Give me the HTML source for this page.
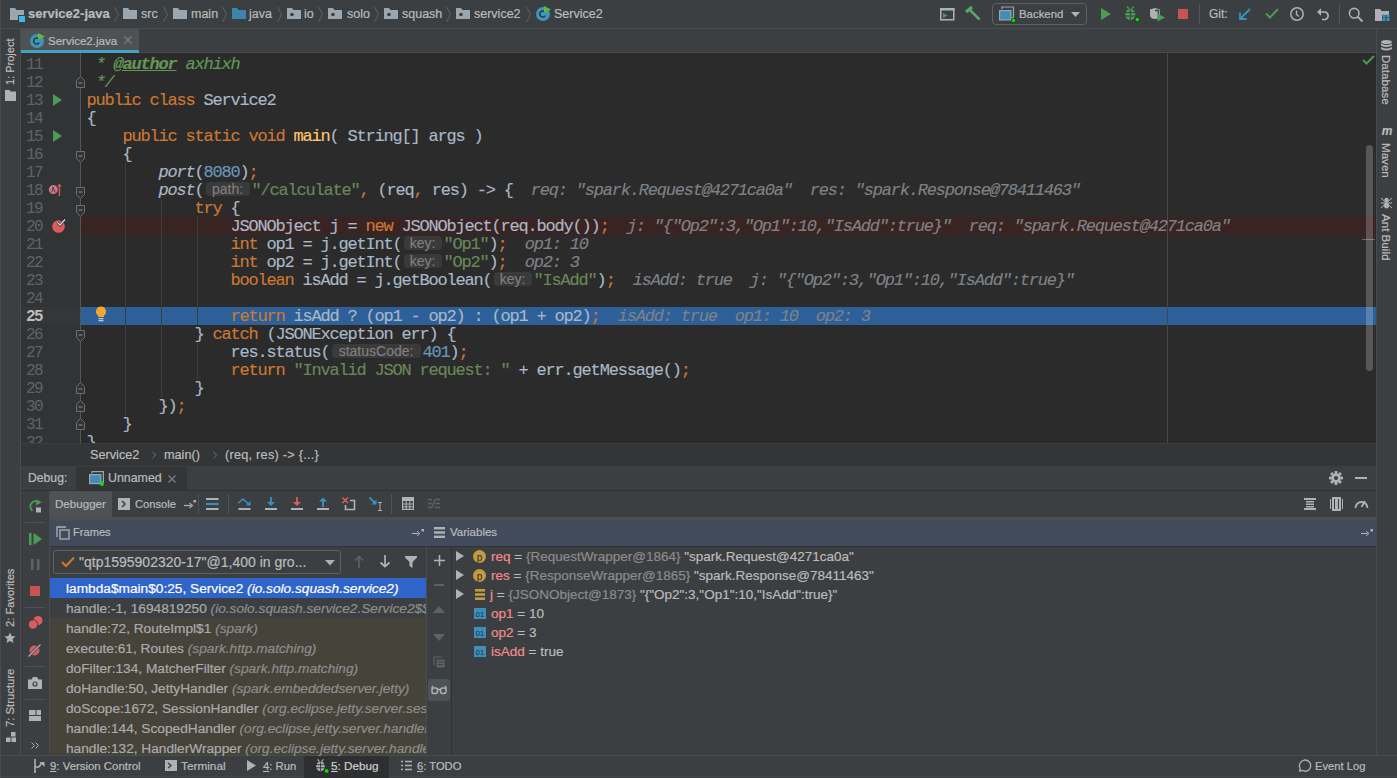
<!DOCTYPE html>
<html><head><meta charset="utf-8">
<style>
*{margin:0;padding:0;box-sizing:border-box}
html,body{width:1397px;height:778px;overflow:hidden;background:#3C3F41;font-family:"Liberation Sans",sans-serif;color:#BBBBBB}
.a{position:absolute}
.t{position:absolute;white-space:pre;font-size:12px;line-height:14px}
.code{position:absolute;left:86.5px;-webkit-text-stroke:0.15px currentColor;font-family:"Liberation Mono",monospace;font-size:17px;letter-spacing:-1.2px;line-height:18px;margin-top:1px;white-space:pre;color:#A9B7C6}
.k{color:#CC7832}.s{color:#6A8759}.n{color:#6897BB}.i{font-style:italic}.m{color:#FFC66D}.c{color:#629755;font-style:italic}
.dv{color:#7E8287;font-style:italic}
.h{display:inline-block;font-family:"Liberation Sans",sans-serif;font-size:14px;letter-spacing:0;color:#808080;background:#3A3A3A;border-radius:4px;line-height:14px;height:14px;vertical-align:1px;text-align:center}
.ln{position:absolute;left:20px;width:22px;text-align:right;font-family:"Liberation Mono",monospace;font-size:16px;letter-spacing:-1.6px;line-height:18px;margin-top:1px;color:#606366}
svg{position:absolute;overflow:visible;z-index:1}
.t{z-index:1;-webkit-text-stroke:0.2px currentColor}
</style></head><body>
<!-- navbar -->
<div class="a" style="left:0;top:0;width:1397px;height:28px;background:#3C3F41"></div>
<div class="a" style="left:0;top:28px;width:1397px;height:1px;background:#4A4B4D"></div>

<!-- navbar content -->
<svg style="left:10px;top:8px" width="15" height="14" viewBox="0 0 15 14">
 <path d="M0 0h5l1.5 2H14v10H0z" fill="#9AA7B0"/><rect x="8" y="7" width="7" height="7" fill="#3C3F41"/><rect x="9" y="8" width="6" height="6" fill="#40B6E0"/></svg>
<div class="t" style="left:28px;top:7px;font-size:13px;font-weight:bold;color:#BBBBBB">service2-java</div>
<svg style="left:114px;top:7px" width="5" height="15"><path d="M0.5 0L4.5 7.5L0.5 15" stroke="#5F6263" fill="none"/></svg>
<svg style="left:123px;top:8px" width="14" height="11" viewBox="0 0 14 11"><path d="M0 0h5l1.5 2H14v9H0z" fill="#9AA7B0"/></svg>
<div class="t" style="left:141px;top:7px;font-size:12.5px">src</div>
<svg style="left:163px;top:7px" width="5" height="15"><path d="M0.5 0L4.5 7.5L0.5 15" stroke="#5F6263" fill="none"/></svg>
<svg style="left:173px;top:8px" width="14" height="11" viewBox="0 0 14 11"><path d="M0 0h5l1.5 2H14v9H0z" fill="#9AA7B0"/></svg>
<div class="t" style="left:191px;top:7px;font-size:12.5px">main</div>
<svg style="left:222px;top:7px" width="5" height="15"><path d="M0.5 0L4.5 7.5L0.5 15" stroke="#5F6263" fill="none"/></svg>
<svg style="left:232px;top:8px" width="14" height="11" viewBox="0 0 14 11"><path d="M0 0h5l1.5 2H14v9H0z" fill="#3E86A9"/></svg>
<div class="t" style="left:249px;top:7px;font-size:12.5px">java</div>
<svg style="left:277px;top:7px" width="5" height="15"><path d="M0.5 0L4.5 7.5L0.5 15" stroke="#5F6263" fill="none"/></svg>
<svg style="left:287px;top:8px" width="14" height="11" viewBox="0 0 14 11"><path d="M0 0h5l1.5 2H14v9H0z" fill="#9AA7B0"/><circle cx="5" cy="6.5" r="1.8" fill="#3C3F41"/></svg>
<div class="t" style="left:304px;top:7px;font-size:12.5px">io</div>
<svg style="left:318px;top:7px" width="5" height="15"><path d="M0.5 0L4.5 7.5L0.5 15" stroke="#5F6263" fill="none"/></svg>
<svg style="left:328px;top:8px" width="14" height="11" viewBox="0 0 14 11"><path d="M0 0h5l1.5 2H14v9H0z" fill="#9AA7B0"/><circle cx="5" cy="6.5" r="1.8" fill="#3C3F41"/></svg>
<div class="t" style="left:347px;top:7px;font-size:12.5px">solo</div>
<svg style="left:374px;top:7px" width="5" height="15"><path d="M0.5 0L4.5 7.5L0.5 15" stroke="#5F6263" fill="none"/></svg>
<svg style="left:384px;top:8px" width="14" height="11" viewBox="0 0 14 11"><path d="M0 0h5l1.5 2H14v9H0z" fill="#9AA7B0"/><circle cx="5" cy="6.5" r="1.8" fill="#3C3F41"/></svg>
<div class="t" style="left:402px;top:7px;font-size:12.5px">squash</div>
<svg style="left:446px;top:7px" width="5" height="15"><path d="M0.5 0L4.5 7.5L0.5 15" stroke="#5F6263" fill="none"/></svg>
<svg style="left:456px;top:8px" width="14" height="11" viewBox="0 0 14 11"><path d="M0 0h5l1.5 2H14v9H0z" fill="#9AA7B0"/><circle cx="5" cy="6.5" r="1.8" fill="#3C3F41"/></svg>
<div class="t" style="left:474px;top:7px;font-size:12.5px">service2</div>
<svg style="left:526px;top:7px" width="5" height="15"><path d="M0.5 0L4.5 7.5L0.5 15" stroke="#5F6263" fill="none"/></svg>
<svg style="left:536px;top:6px" width="15" height="15" viewBox="0 0 15 15"><circle cx="7" cy="8" r="7" fill="#3F95BA"/><path d="M9.2 6.3A3 3 0 1 0 9.2 9.7" stroke="#283A44" stroke-width="1.6" fill="none"/><path d="M8 0L15 3.5L8 7z" fill="#62B543"/></svg>
<div class="t" style="left:554px;top:7px;font-size:12.5px">Service2</div>
<!-- toolbar right -->
<svg style="left:940px;top:8px" width="15" height="13" viewBox="0 0 15 13"><rect x="0.75" y="0.75" width="13" height="11" fill="none" stroke="#AFB1B3" stroke-width="1.5"/><rect x="0" y="0" width="14.5" height="2.5" fill="#AFB1B3"/><path d="M3 5l4.5 2.5L3 10z" fill="#499C54"/></svg>
<svg style="left:965px;top:6px" width="16" height="15" viewBox="0 0 16 15"><path d="M1 6L7 1" stroke="#59A869" stroke-width="3"/><path d="M4.5 3.5L14.5 13.5" stroke="#59A869" stroke-width="2.5"/></svg>
<div class="a" style="left:992px;top:3px;width:95px;height:22px;border:1px solid #5E6163;border-radius:4px"></div>
<svg style="left:999px;top:6px" width="17" height="17" viewBox="0 0 17 17"><path d="M3 3V1h11.5v10.5H12.5" stroke="#9AA7B0" stroke-width="1.2" fill="none"/><rect x="0.6" y="4.6" width="11.3" height="9.3" fill="#3D8EB9" stroke="#9AA7B0" stroke-width="1.2"/><circle cx="14.4" cy="14.4" r="2.2" fill="#00E600" stroke="#1C1C1C" stroke-width="0.6"/></svg>
<div class="t" style="left:1019px;top:7px;font-size:11.4px">Backend</div>
<svg style="left:1071px;top:12px" width="9" height="5"><path d="M0 0h9L4.5 5z" fill="#AFB1B3"/></svg>
<svg style="left:1101px;top:8px" width="10" height="12"><path d="M0 0L10 6L0 12z" fill="#499C54"/></svg>
<svg style="left:1124px;top:6px" width="16" height="16" viewBox="0 0 16 16"><g fill="#499C54"><ellipse cx="6.3" cy="8.5" rx="5" ry="5.5"/><path d="M3 0.5L5 3M9.6 0.5L7.6 3" stroke="#499C54" stroke-width="1.3"/></g><path d="M0 6.5h12.6M0 10h12.6M6.3 4v10" stroke="#3C3F41" stroke-width="1"/><circle cx="13.3" cy="13.6" r="2.2" fill="#00E600" stroke="#1C1C1C" stroke-width="0.6"/></svg>
<svg style="left:1150px;top:8px" width="16" height="14" viewBox="0 0 16 14"><path d="M0 1.5L5 0L10 1.5V7C10 10 7 11 5 11C3 11 0 10 0 7z" fill="#AFB1B3"/><path d="M5 2.5H8.5V9" stroke="#3C3F41" stroke-width="1.4" fill="none"/><path d="M7.5 5.5L15 9.5L7.5 13.5z" fill="#499C54"/></svg>
<div class="a" style="left:1178px;top:9px;width:10px;height:10px;background:#C75450"></div>
<div class="a" style="left:1199px;top:4px;width:1px;height:20px;background:#515658"></div>
<div class="t" style="left:1209px;top:7px;font-size:12px">Git:</div>
<svg style="left:1239px;top:8px" width="12" height="12"><path d="M11 1L2 10" stroke="#3592C4" stroke-width="1.8"/><path d="M1 4.5V11H7.5" stroke="#3592C4" stroke-width="1.8" fill="none"/></svg>
<svg style="left:1265px;top:8px" width="14" height="11"><path d="M1 5.5L5 9.5L13 1" stroke="#499C54" stroke-width="2" fill="none"/></svg>
<svg style="left:1290px;top:7px" width="15" height="15"><circle cx="7" cy="7" r="6.2" stroke="#AFB1B3" stroke-width="1.5" fill="none"/><path d="M6.5 3.5V7.5L9 9.5" stroke="#AFB1B3" stroke-width="1.4" fill="none"/></svg>
<svg style="left:1317px;top:7px" width="14" height="14"><path d="M1.5 5H8.5A4 4 0 0 1 8.5 12.5H5" stroke="#AFB1B3" stroke-width="1.6" fill="none"/><path d="M0 5L4 1.2V8.8z" fill="#AFB1B3"/></svg>
<div class="a" style="left:1339px;top:4px;width:1px;height:20px;background:#515658"></div>
<svg style="left:1348px;top:7px" width="16" height="15"><circle cx="6.2" cy="6.2" r="4.8" stroke="#AFB1B3" stroke-width="1.6" fill="none"/><path d="M9.5 9.5L14.5 14.5" stroke="#AFB1B3" stroke-width="1.8"/></svg>
<svg style="left:1375px;top:9px" width="15" height="12" viewBox="0 0 15 12"><path d="M0 0h5l1.5 2H14v4H7v6H0z" fill="#AFB1B3"/><rect x="7.5" y="5.5" width="3" height="3" fill="#3592C4"/><rect x="11.5" y="5.5" width="3" height="3" fill="#3592C4"/><rect x="7.5" y="9" width="3" height="3" fill="#3592C4"/><rect x="11.5" y="9" width="3" height="3" fill="#3592C4"/></svg>
<!-- tab -->
<svg style="left:30px;top:33px" width="15" height="15" viewBox="0 0 15 15"><circle cx="7" cy="8" r="7" fill="#3F95BA"/><path d="M9.2 6.3A3 3 0 1 0 9.2 9.7" stroke="#283A44" stroke-width="1.6" fill="none"/><path d="M8 0L15 3.5L8 7z" fill="#62B543"/></svg>
<div class="t" style="left:48px;top:34px;font-size:11.5px">Service2.java</div>
<svg style="left:124px;top:36px" width="8" height="8"><path d="M0.5 0.5L7.5 7.5M7.5 0.5L0.5 7.5" stroke="#7E8083" stroke-width="1.1"/></svg>

<!-- left strip -->
<div class="a" style="left:0;top:29px;width:20px;height:726px;background:#3C3F41"></div>
<div class="a" style="left:20px;top:29px;width:1px;height:726px;background:#4A4B4D"></div>
<!-- right strip -->
<div class="a" style="left:1376px;top:29px;width:1px;height:726px;background:#4A4B4D"></div>
<!-- tab row -->
<div class="a" style="left:21px;top:29px;width:1355px;height:24px;background:#3C3F41"></div>
<div class="a" style="left:21px;top:52px;width:1355px;height:1px;background:#4A4B4D"></div>
<div class="a" style="left:21px;top:29px;width:118px;height:24px;background:#4E5254"></div>
<div class="a" style="left:21px;top:50px;width:118px;height:3px;background:#41A2C3"></div>
<!-- editor -->
<div class="a" style="left:21px;top:53px;width:1355px;height:390px;background:#2B2B2B;overflow:hidden" id="ed"></div>
<div class="a" style="left:21px;top:53px;width:59px;height:390px;background:#313335"></div>
<div class="a" style="left:80px;top:53px;width:1px;height:390px;background:#555555"></div>

<!-- editor rows -->
<div class="a" style="left:81px;top:217px;width:1295px;height:18px;background:#3A2323"></div>
<div class="a" style="left:81px;top:307px;width:1295px;height:18px;background:#2D6099"></div>
<div class="a" style="left:21px;top:307px;width:59px;height:18px;background:#343638"></div>
<!-- indent guides -->
<div class="a" style="left:125px;top:163px;width:1px;height:252px;background:#3D3D3D"></div>
<div class="a" style="left:161px;top:199px;width:1px;height:198px;background:#3D3D3D"></div>
<div class="a" style="left:197px;top:217px;width:1px;height:108px;background:#3D3D3D"></div>
<div class="a" style="left:197px;top:343px;width:1px;height:36px;background:#3D3D3D"></div>
<!-- right margin -->
<div class="a" style="left:1167px;top:53px;width:1px;height:390px;background:#474747"></div>
<!-- scrollbar -->
<div class="a" style="left:1366px;top:145px;width:7px;height:226px;background:rgba(255,255,255,0.21);border-radius:4px;z-index:2"></div>
<div class="ln" style="top:55px">11</div>
<div class="code" style="top:55px"> <span class="c">* <b style="text-decoration:underline">@author</b> axhixh</span></div>
<div class="ln" style="top:73px">12</div>
<div class="code" style="top:73px"> <span class="c">*/</span></div>
<div class="ln" style="top:91px">13</div>
<div class="code" style="top:91px"><span class="k">public class</span> Service2</div>
<div class="ln" style="top:109px">14</div>
<div class="code" style="top:109px">{</div>
<div class="ln" style="top:127px">15</div>
<div class="code" style="top:127px">    <span class="k">public static void</span> <span class="m">main</span>( String[] args )</div>
<div class="ln" style="top:145px">16</div>
<div class="code" style="top:145px">    {</div>
<div class="ln" style="top:163px">17</div>
<div class="code" style="top:163px">        <span class="i">port</span>(<span class="n">8080</span>)<span class="k">;</span></div>
<div class="ln" style="top:181px">18</div>
<div class="code" style="top:181px">        <span class="i">post</span>(<span class="h" style="width:44px;margin:0 2px 0 2px">path:</span><span class="s">"/calculate"</span><span class="k">,</span> (req<span class="k">,</span> res) -&gt; {  <span class="dv">req: "spark.Request@4271ca0a"  res: "spark.Response@78411463"</span></div>
<div class="ln" style="top:199px">19</div>
<div class="code" style="top:199px">            <span class="k">try</span> {</div>
<div class="ln" style="top:217px">20</div>
<div class="code" style="top:217px">                JSONObject j = <span class="k">new</span> JSONObject(req.body())<span class="k">;</span>  <span class="dv">j: "{"Op2":3,"Op1":10,"IsAdd":true}"  req: "spark.Request@4271ca0a"</span></div>
<div class="ln" style="top:235px">21</div>
<div class="code" style="top:235px">                <span class="k">int</span> op1 = j.getInt(<span class="h" style="width:38px;margin:0 2px 0 2px">key:</span><span class="s">"Op1"</span>)<span class="k">;</span>  <span class="dv">op1: 10</span></div>
<div class="ln" style="top:253px">22</div>
<div class="code" style="top:253px">                <span class="k">int</span> op2 = j.getInt(<span class="h" style="width:38px;margin:0 2px 0 2px">key:</span><span class="s">"Op2"</span>)<span class="k">;</span>  <span class="dv">op2: 3</span></div>
<div class="ln" style="top:271px">23</div>
<div class="code" style="top:271px">                <span class="k">boolean</span> isAdd = j.getBoolean(<span class="h" style="width:38px;margin:0 2px 0 2px">key:</span><span class="s">"IsAdd"</span>)<span class="k">;</span>  <span class="dv">isAdd: true  j: "{"Op2":3,"Op1":10,"IsAdd":true}"</span></div>
<div class="ln" style="top:289px">24</div>
<div class="code" style="top:289px"></div>
<div class="ln" style="top:307px;color:#BDBDBD;font-weight:bold">25</div>
<div class="code" style="top:307px">                <span class="k">return</span> isAdd ? (op1 - op2) : (op1 + op2)<span class="k">;</span>  <span class="dv">isAdd: true  op1: 10  op2: 3</span></div>
<div class="ln" style="top:325px">26</div>
<div class="code" style="top:325px">            } <span class="k">catch</span> (JSONException err) {</div>
<div class="ln" style="top:343px">27</div>
<div class="code" style="top:343px">                res.status(<span class="h" style="width:89px;margin:0 2px 0 2px">statusCode:</span><span class="n">401</span>)<span class="k">;</span></div>
<div class="ln" style="top:361px">28</div>
<div class="code" style="top:361px">                <span class="k">return</span> <span class="s">"Invalid JSON request: "</span> + err.getMessage()<span class="k">;</span></div>
<div class="ln" style="top:379px">29</div>
<div class="code" style="top:379px">            }</div>
<div class="ln" style="top:397px">30</div>
<div class="code" style="top:397px">        })<span class="k">;</span></div>
<div class="ln" style="top:415px">31</div>
<div class="code" style="top:415px">    }</div>
<div class="ln" style="top:433px">32</div>
<div class="code" style="top:433px">}</div>

<!-- gutter icons -->
<svg style="left:76px;top:76px" width="9" height="12" viewBox="0 0 9 12"><path d="M0.5 11.5H8.5V4.5L4.5 0.5L0.5 4.5z" fill="#313335" stroke="#6E6E6E"/><path d="M2.5 7H6.5" stroke="#8C8C8C"/></svg><svg style="left:76px;top:151px" width="9" height="12" viewBox="0 0 9 12"><path d="M0.5 0.5H8.5V7.5L4.5 11.5L0.5 7.5z" fill="#313335" stroke="#6E6E6E"/><path d="M2.5 5H6.5" stroke="#8C8C8C"/></svg><svg style="left:76px;top:187px" width="9" height="12" viewBox="0 0 9 12"><path d="M0.5 0.5H8.5V7.5L4.5 11.5L0.5 7.5z" fill="#313335" stroke="#6E6E6E"/><path d="M2.5 5H6.5" stroke="#8C8C8C"/></svg><svg style="left:76px;top:205px" width="9" height="12" viewBox="0 0 9 12"><path d="M0.5 0.5H8.5V7.5L4.5 11.5L0.5 7.5z" fill="#313335" stroke="#6E6E6E"/><path d="M2.5 5H6.5" stroke="#8C8C8C"/></svg><svg style="left:76px;top:330px" width="9" height="12" viewBox="0 0 9 12"><path d="M0.5 0.5H8.5V7.5L4.5 11.5L0.5 7.5z" fill="#313335" stroke="#6E6E6E"/><path d="M2.5 5H6.5" stroke="#8C8C8C"/></svg><svg style="left:76px;top:382px" width="9" height="12" viewBox="0 0 9 12"><path d="M0.5 11.5H8.5V4.5L4.5 0.5L0.5 4.5z" fill="#313335" stroke="#6E6E6E"/><path d="M2.5 7H6.5" stroke="#8C8C8C"/></svg><svg style="left:76px;top:400px" width="9" height="12" viewBox="0 0 9 12"><path d="M0.5 11.5H8.5V4.5L4.5 0.5L0.5 4.5z" fill="#313335" stroke="#6E6E6E"/><path d="M2.5 7H6.5" stroke="#8C8C8C"/></svg><svg style="left:76px;top:418px" width="9" height="12" viewBox="0 0 9 12"><path d="M0.5 11.5H8.5V4.5L4.5 0.5L0.5 4.5z" fill="#313335" stroke="#6E6E6E"/><path d="M2.5 7H6.5" stroke="#8C8C8C"/></svg>
<svg style="left:53px;top:94px" width="9" height="12"><path d="M0 0L9 6L0 12z" fill="#499C54"/></svg>
<svg style="left:53px;top:130px" width="9" height="12"><path d="M0 0L9 6L0 12z" fill="#499C54"/></svg>
<svg style="left:48px;top:183px" width="14" height="14" viewBox="0 0 14 14"><circle cx="5.3" cy="6.6" r="4.5" fill="#C97A91"/><path d="M3.5 9.5L5.5 4.5M4.6 3.6L7.3 9.5" stroke="#4A2A35" stroke-width="0.9" fill="none"/><path d="M11.4 13V2.5" stroke="#D9534F" stroke-width="1.5"/><path d="M9 3.5L11.4 0.5L13.8 3.5z" fill="#D9534F"/></svg>
<svg style="left:52px;top:218px" width="14" height="15" viewBox="0 0 14 15"><circle cx="6.5" cy="8.5" r="6.3" fill="#DB5C5C"/><path d="M5.5 4.5L8 7L13 1.5" stroke="#2B2B2B" stroke-width="2.6" fill="none"/><path d="M5.5 4.5L8 7L13 1.5" stroke="#D8D8D8" stroke-width="1.3" fill="none"/></svg>
<svg style="left:95px;top:306px" width="12" height="16" viewBox="0 0 12 16"><path d="M6 0.5A5 5 0 0 1 9 9.5V11H3V9.5A5 5 0 0 1 6 0.5z" fill="#F0A732"/><path d="M3.5 12.7H8.5M3.5 14.8H8.5" stroke="#E8E8E8" stroke-width="1.1"/></svg>
<svg style="left:1362px;top:55px" width="13" height="10"><path d="M1 5L4.5 8.5L12 1" stroke="#499C54" stroke-width="2" fill="none"/></svg>
<div class="a" style="left:1362px;top:239px;width:13px;height:1px;background:#8A5A3A;z-index:1"></div>

<!-- breadcrumbs -->
<div class="a" style="left:21px;top:443px;width:1355px;height:23px;background:#333537"></div>
<div class="a" style="left:21px;top:443px;width:1355px;height:1px;background:#3A3C3E"></div>
<!-- debug header -->
<div class="a" style="left:76px;top:467px;width:111px;height:23px;background:#333537"></div>
<div class="a" style="left:21px;top:490px;width:1355px;height:1px;background:#323232"></div>
<!-- debug toolbar -->
<div class="a" style="left:49px;top:491px;width:1px;height:264px;background:#4A4B4D"></div>
<div class="a" style="left:50px;top:491px;width:62px;height:26px;background:#4E5254"></div>
<div class="a" style="left:50px;top:517px;width:1326px;height:4px;background:#4B4E50"></div>
<!-- headers -->
<div class="a" style="left:50px;top:521px;width:376px;height:25px;background:#414B5C"></div>
<div class="a" style="left:426px;top:521px;width:1px;height:234px;background:#4A4D50"></div>
<div class="a" style="left:427px;top:521px;width:950px;height:25px;background:#414B5C"></div>
<div class="a" style="left:50px;top:546px;width:1326px;height:1px;background:#323232"></div>
<!-- frames list -->
<div class="a" style="left:50px;top:618px;width:376px;height:137px;background:#46433A"></div>
<div class="a" style="left:50px;top:578px;width:376px;height:20px;background:#2F65CA"></div>
<div class="a" style="left:451px;top:547px;width:1px;height:208px;background:#323232"></div>
<!-- status bar -->
<div class="a" style="left:0;top:755px;width:1397px;height:1px;background:#4A4B4D"></div><div class="a" style="left:0;top:0;width:1px;height:778px;background:#4A4B4D"></div><div class="a" style="left:0;top:776px;width:1397px;height:1px;background:#45474A"></div>
<div class="a" style="left:304px;top:756px;width:85px;height:22px;background:#2D2F30"></div>

<!-- left strip content -->
<div class="t" style="left:5px;top:38px;width:11px;height:48px;writing-mode:vertical-rl;transform:rotate(180deg);font-size:11px;line-height:11px;text-align:center">1: Project</div>
<svg style="left:5px;top:90px" width="11" height="11"><path d="M0 0h4.5l1.2 1.6H11V11H0z" fill="#AFB1B3"/></svg>
<div class="t" style="left:5px;top:568px;width:11px;height:59px;writing-mode:vertical-rl;transform:rotate(180deg);font-size:11.2px;line-height:11px;text-align:center">2: Favorites</div>
<svg style="left:4px;top:632px" width="12" height="12" viewBox="0 0 24 24"><path d="M12 1l3.3 7.2 7.7.8-5.8 5.2 1.7 7.6L12 17.9l-6.9 3.9 1.7-7.6L1 9l7.7-.8z" fill="#AFB1B3"/></svg>
<div class="t" style="left:5px;top:668px;width:11px;height:60px;writing-mode:vertical-rl;transform:rotate(180deg);font-size:11.3px;line-height:11px;text-align:center">7: Structure</div>
<svg style="left:6px;top:732px" width="10" height="10"><rect x="5" y="0" width="4.5" height="4.5" fill="#AFB1B3"/><rect x="0" y="5.5" width="4.5" height="4.5" fill="#AFB1B3"/><rect x="5.5" y="5.5" width="4.5" height="4.5" fill="#AFB1B3"/></svg>
<!-- right strip content -->
<svg style="left:1381px;top:40px" width="11" height="12" viewBox="0 0 11 12"><ellipse cx="5.5" cy="2" rx="5.5" ry="2" fill="#AFB1B3"/><path d="M0 3.5Q5.5 6.5 11 3.5V5.5Q5.5 8.5 0 5.5zM0 7Q5.5 10 11 7V9Q5.5 12 0 9z" fill="#AFB1B3"/></svg>
<div class="t" style="left:1381px;top:55px;width:11px;height:50px;writing-mode:vertical-rl;font-size:11.6px;line-height:11px;text-align:center">Database</div>
<div class="t" style="left:1380px;top:126px;width:14px;height:11px;font-size:12px;line-height:11px;font-weight:bold;font-style:italic;text-align:center">m</div>
<div class="t" style="left:1381px;top:143px;width:11px;height:35px;writing-mode:vertical-rl;font-size:11.6px;line-height:11px;text-align:center">Maven</div>
<svg style="left:1381px;top:197px" width="11" height="12" viewBox="0 0 11 12"><ellipse cx="5.5" cy="3" rx="2.2" ry="2.2" fill="#AFB1B3"/><ellipse cx="5.5" cy="8.5" rx="2.5" ry="3" fill="#AFB1B3"/><path d="M0 1L11 11M11 1L0 11M0 6H11" stroke="#AFB1B3" stroke-width="1"/></svg>
<div class="t" style="left:1381px;top:214px;width:11px;height:46px;writing-mode:vertical-rl;font-size:11.6px;line-height:11px;text-align:center">Ant Build</div>
<!-- breadcrumbs content -->
<div class="t" style="left:90px;top:448px;font-size:12.7px;color:#BBBBBB">Service2</div>
<svg style="left:152px;top:451px" width="4" height="8"><path d="M0.5 0.5L3.5 4L0.5 7.5" stroke="#6A6D6F" fill="none"/></svg>
<div class="t" style="left:164px;top:448px;font-size:12.7px;color:#BBBBBB">main()</div>
<svg style="left:213px;top:451px" width="4" height="8"><path d="M0.5 0.5L3.5 4L0.5 7.5" stroke="#6A6D6F" fill="none"/></svg>
<div class="t" style="left:225px;top:448px;font-size:12.7px;color:#BBBBBB;letter-spacing:0.25px">(req, res) -&gt; {...}</div>
<!-- debug header content -->
<div class="t" style="left:28px;top:471px;font-size:12.2px">Debug:</div>
<svg style="left:89px;top:471px" width="16" height="15" viewBox="0 0 16 15"><path d="M3 2.5V0.6h11.4v10.2H12.5" stroke="#9AA7B0" stroke-width="1.2" fill="none"/><rect x="0.6" y="3.6" width="11.3" height="9" fill="#3D8EB9" stroke="#9AA7B0" stroke-width="1.2"/><circle cx="13" cy="13" r="2" fill="#00E600"/></svg>
<div class="t" style="left:108px;top:471px;font-size:12.4px">Unnamed</div>
<svg style="left:168px;top:475px" width="8" height="8"><path d="M0.5 0.5L7.5 7.5M7.5 0.5L0.5 7.5" stroke="#7E8083" stroke-width="1.1"/></svg>
<svg style="left:1329px;top:471px" width="14" height="14" viewBox="0 0 14 14"><g fill="#AFB1B3"><circle cx="7" cy="7" r="4.6"/><rect x="5.6" y="0" width="2.8" height="14"/><rect x="0" y="5.6" width="14" height="2.8"/><rect x="5.6" y="0" width="2.8" height="14" transform="rotate(45 7 7)"/><rect x="5.6" y="0" width="2.8" height="14" transform="rotate(-45 7 7)"/></g><circle cx="7" cy="7" r="2" fill="#3C3F41"/></svg>
<div class="a" style="left:1355px;top:477px;width:12px;height:2px;background:#AFB1B3"></div>
<!-- debug toolbar content -->
<svg style="left:28px;top:499px" width="15" height="14" viewBox="0 0 15 14"><path d="M11 3.2A5 5 0 1 0 4.5 11.8" stroke="#499C54" stroke-width="1.8" fill="none"/><path d="M8.2 0.5L13.8 3.2L8.2 6.5z" fill="#499C54"/><rect x="8" y="8.5" width="5" height="5" fill="#AFB1B3"/></svg>
<div class="a" style="left:25px;top:522px;width:20px;height:1px;background:#4F5254"></div>
<svg style="left:29px;top:533px" width="13" height="12"><rect x="0" y="0" width="2.5" height="12" fill="#499C54"/><path d="M4.5 0L13 6L4.5 12z" fill="#499C54"/></svg>
<svg style="left:31px;top:559px" width="9" height="11"><rect x="0" y="0" width="2.5" height="11" fill="#5F6263"/><rect x="6" y="0" width="2.5" height="11" fill="#5F6263"/></svg>
<div class="a" style="left:30px;top:586px;width:10px;height:10px;background:#C75450"></div>
<div class="a" style="left:25px;top:607px;width:20px;height:1px;background:#4F5254"></div>
<svg style="left:28px;top:616px" width="15" height="14"><circle cx="10" cy="4.5" r="4.5" fill="#DB5C5C"/><circle cx="5" cy="8.5" r="5" fill="#3C3F41"/><circle cx="5" cy="8.5" r="4.2" fill="#DB5C5C"/></svg>
<svg style="left:28px;top:644px" width="13" height="13"><circle cx="6.5" cy="6.5" r="5" fill="#DB5C5C"/><path d="M0.5 12.5L12.5 0.5" stroke="#3C3F41" stroke-width="2.6"/><path d="M0.5 12.5L12.5 0.5" stroke="#AFB1B3" stroke-width="1.2"/></svg>
<div class="a" style="left:25px;top:666px;width:20px;height:1px;background:#4F5254"></div>
<svg style="left:28px;top:677px" width="14" height="12" viewBox="0 0 14 12"><path d="M0 2.5H3.5L5 0H9L10.5 2.5H14V12H0z" fill="#AFB1B3"/><circle cx="7" cy="7" r="2.6" fill="#3C3F41"/><circle cx="7" cy="7" r="1.4" fill="#AFB1B3"/></svg>
<div class="a" style="left:25px;top:699px;width:20px;height:1px;background:#4F5254"></div>
<svg style="left:29px;top:710px" width="12" height="11"><rect x="0" y="0" width="6.5" height="5" fill="#AFB1B3"/><rect x="7.5" y="0" width="4.5" height="5" fill="#AFB1B3"/><rect x="0" y="6" width="12" height="5" fill="#AFB1B3"/></svg>
<svg style="left:31px;top:742px" width="9" height="7"><path d="M0.5 0.5L3.5 3.5L0.5 6.5M4.5 0.5L7.5 3.5L4.5 6.5" stroke="#AFB1B3" fill="none"/></svg>
<div class="t" style="left:55px;top:497px;font-size:11.6px">Debugger</div>
<svg style="left:118px;top:498px" width="12" height="12"><rect width="12" height="12" fill="#AFB1B3"/><path d="M4 3L7 6L4 9" stroke="#3C3F41" stroke-width="1.5" fill="none"/></svg>
<div class="t" style="left:135px;top:497px;font-size:11.2px">Console</div>
<svg style="left:184px;top:500px" width="12" height="8"><path d="M0 5.5H7" stroke="#AFB1B3" stroke-width="1.2"/><path d="M5.5 3L8.5 5.5L5.5 8" stroke="#AFB1B3" stroke-width="1.1" fill="none"/><rect x="9.5" y="0" width="2.5" height="2.5" fill="#AFB1B3"/></svg>
<div class="a" style="left:198px;top:494px;width:1px;height:20px;background:#505355"></div>
<svg style="left:206px;top:498px" width="13" height="12"><rect y="0" width="12.5" height="2" fill="#AFB1B3"/><rect y="5" width="12.5" height="2" fill="#3592C4"/><rect y="10" width="12.5" height="2" fill="#AFB1B3"/></svg>
<div class="a" style="left:228px;top:494px;width:1px;height:20px;background:#505355"></div>
<svg style="left:238px;top:497px" width="14" height="14" viewBox="0 0 14 14"><path d="M0.5 6L5 2L11 7.5" stroke="#3592C4" stroke-width="1.6" fill="none"/><path d="M8 8.5H12.5V4z" fill="#3592C4"/><rect x="0.5" y="11" width="12" height="2" fill="#AFB1B3"/></svg>
<svg style="left:265px;top:497px" width="13" height="14" viewBox="0 0 13 14"><path d="M6 0V6" stroke="#3592C4" stroke-width="1.8"/><path d="M2 5H10L6 9z" fill="#3592C4"/><rect x="0" y="11" width="12" height="2" fill="#AFB1B3"/></svg>
<svg style="left:291px;top:497px" width="13" height="14" viewBox="0 0 13 14"><path d="M6 0V6" stroke="#DB5C5C" stroke-width="1.8"/><path d="M2 5H10L6 9z" fill="#DB5C5C"/><rect x="0" y="11" width="12" height="2" fill="#AFB1B3"/></svg>
<svg style="left:317px;top:497px" width="13" height="14" viewBox="0 0 13 14"><path d="M6 3.5V10" stroke="#3592C4" stroke-width="1.8"/><path d="M2 4.5H10L6 0.5z" fill="#3592C4"/><rect x="0" y="11" width="12" height="2" fill="#AFB1B3"/></svg>
<svg style="left:342px;top:497px" width="14" height="14" viewBox="0 0 14 14"><path d="M0.5 0.5L6 6M6 0.5L0.5 6" stroke="#DB5C5C" stroke-width="1.6"/><path d="M8 3.5H12.5V12.5H3.5V8" stroke="#AFB1B3" stroke-width="1.6" fill="none"/></svg>
<svg style="left:369px;top:497px" width="14" height="15" viewBox="0 0 14 15"><path d="M0.5 0.5L6 6" stroke="#3592C4" stroke-width="1.8"/><path d="M2.5 7.5H7.5V2.5z" fill="#3592C4"/><path d="M9 5.5H13M11 5.5V13.5M9 13.5H13" stroke="#AFB1B3" stroke-width="1"/></svg>
<div class="a" style="left:391px;top:494px;width:1px;height:20px;background:#505355"></div>
<svg style="left:402px;top:497px" width="12" height="13" viewBox="0 0 12 13"><rect x="0.6" y="0.6" width="10.8" height="11.8" fill="none" stroke="#AFB1B3" stroke-width="1.2"/><rect x="0.6" y="0.6" width="10.8" height="3.4" fill="#AFB1B3"/><path d="M0.6 7H11.4M0.6 9.8H11.4M4.2 4V12.4M7.8 4V12.4" stroke="#AFB1B3" stroke-width="1"/></svg>
<svg style="left:428px;top:498px" width="12" height="12" viewBox="0 0 12 12"><path d="M0 1.5H4M0 5.5H4M0 9.5H4M7 1.5H12M7 5.5H12M7 9.5H12M4 9.5L7 1.5" stroke="#5F6263" stroke-width="1.4" fill="none"/></svg>
<svg style="left:1304px;top:498px" width="12" height="12"><rect x="0" y="0" width="12" height="2" fill="#AFB1B3"/><rect x="0" y="10" width="12" height="2" fill="#AFB1B3"/><rect x="2" y="3" width="8" height="1.5" fill="#AFB1B3"/><rect x="2" y="5.5" width="8" height="1.5" fill="#AFB1B3"/><rect x="2" y="8" width="8" height="1.5" fill="#AFB1B3"/></svg>
<svg style="left:1330px;top:497px" width="13" height="14"><rect x="2" y="0" width="9" height="14" fill="#AFB1B3"/><path d="M4.5 2V12M8.5 2V12" stroke="#3C3F41" stroke-width="1"/><rect x="0" y="2" width="1" height="10" fill="#AFB1B3"/><rect x="12" y="2" width="1" height="10" fill="#AFB1B3"/></svg>
<svg style="left:1354px;top:497px" width="15" height="12" viewBox="0 0 15 12"><path d="M1.5 11A6 6 0 1 1 13.5 11" stroke="#AFB1B3" stroke-width="1.8" fill="none"/><path d="M7.5 10L11 4" stroke="#AFB1B3" stroke-width="1.8"/></svg>
<!-- frames header -->
<svg style="left:56px;top:526px" width="14" height="14" viewBox="0 0 14 14"><path d="M1 11V1H10" stroke="#AFB1B3" stroke-width="1.3" fill="none"/><rect x="4" y="4" width="9" height="9" fill="none" stroke="#AFB1B3" stroke-width="1.3"/></svg>
<div class="t" style="left:73px;top:525px;font-size:11.1px">Frames</div>
<svg style="left:412px;top:529px" width="12" height="7"><path d="M0 4.5H6.5" stroke="#AFB1B3" stroke-width="1.1"/><path d="M5 2.2L8 4.5L5 6.8" stroke="#AFB1B3" stroke-width="1" fill="none"/><rect x="9.5" y="0" width="2.5" height="2.5" fill="#AFB1B3"/></svg>
<svg style="left:434px;top:527px" width="11" height="11"><rect y="0" width="11" height="2.4" fill="#AFB1B3"/><rect y="4.3" width="11" height="2.4" fill="#AFB1B3"/><rect y="8.6" width="11" height="2.4" fill="#AFB1B3"/></svg>
<div class="t" style="left:450px;top:525px;font-size:11.5px">Variables</div>
<svg style="left:1361px;top:529px" width="12" height="7"><path d="M0 4.5H6.5" stroke="#AFB1B3" stroke-width="1.1"/><path d="M5 2.2L8 4.5L5 6.8" stroke="#AFB1B3" stroke-width="1" fill="none"/><rect x="9.5" y="0" width="2.5" height="2.5" fill="#AFB1B3"/></svg>
<!-- thread combo -->
<div class="a" style="left:53px;top:550px;width:288px;height:24px;border:1px solid #5E6163;border-radius:3px"></div>
<svg style="left:61px;top:556px" width="14" height="12"><path d="M1 6L5 10L13 1.5" stroke="#D9752B" stroke-width="2" fill="none"/></svg>
<div class="t" style="left:79px;top:555px;font-size:14px;line-height:15px">"qtp1595902320-17"@1,400 in gro...</div>
<svg style="left:325px;top:560px" width="10" height="6"><path d="M0 0H10L5 5.5z" fill="#AFB1B3"/></svg>
<svg style="left:354px;top:555px" width="10" height="13"><path d="M5 1.5V13M1 5.5L5 1.5L9 5.5" stroke="#5F6263" stroke-width="1.6" fill="none"/></svg>
<svg style="left:379px;top:555px" width="12" height="13"><path d="M6 0V11.5M1.5 7.5L6 11.5L10.5 7.5" stroke="#AFB1B3" stroke-width="1.7" fill="none"/></svg>
<svg style="left:405px;top:556px" width="12" height="12"><path d="M0 0H12V1.5L7.5 6V12L4.5 10V6L0 1.5z" fill="#AFB1B3"/></svg>
<!-- frames rows -->
<div class="t" style="left:66px;top:582px;font-size:13.7px;color:#FFFFFF">lambda$main$0:25, Service2 <i>(io.solo.squash.service2)</i></div>
<div class="t" style="left:66px;top:602px;width:360px;overflow:hidden;font-size:13.7px;color:#ABABAB">handle:-1, 1694819250 <i style="color:#8E8E8E">(io.solo.squash.service2.Service2$$Lambda$5/1694819250)</i></div>
<div class="t" style="left:66px;top:622px;width:360px;overflow:hidden;font-size:13.7px;color:#ABABAB">handle:72, RouteImpl$1 <i style="color:#8E8E8E">(spark)</i></div>
<div class="t" style="left:66px;top:642px;width:360px;overflow:hidden;font-size:13.7px;color:#ABABAB">execute:61, Routes <i style="color:#8E8E8E">(spark.http.matching)</i></div>
<div class="t" style="left:66px;top:662px;width:360px;overflow:hidden;font-size:13.7px;color:#ABABAB">doFilter:134, MatcherFilter <i style="color:#8E8E8E">(spark.http.matching)</i></div>
<div class="t" style="left:66px;top:682px;width:360px;overflow:hidden;font-size:13.7px;color:#ABABAB">doHandle:50, JettyHandler <i style="color:#8E8E8E">(spark.embeddedserver.jetty)</i></div>
<div class="t" style="left:66px;top:702px;width:360px;overflow:hidden;font-size:13.7px;color:#ABABAB">doScope:1672, SessionHandler <i style="color:#8E8E8E">(org.eclipse.jetty.server.session)</i></div>
<div class="t" style="left:66px;top:722px;width:360px;overflow:hidden;font-size:13.7px;color:#ABABAB">handle:144, ScopedHandler <i style="color:#8E8E8E">(org.eclipse.jetty.server.handler)</i></div>
<div class="t" style="left:66px;top:742px;width:360px;overflow:hidden;font-size:13.7px;color:#ABABAB">handle:132, HandlerWrapper <i style="color:#8E8E8E">(org.eclipse.jetty.server.handler)</i></div>
<!-- variables toolbar column -->
<svg style="left:434px;top:555px" width="11" height="11"><path d="M5.5 0V11M0 5.5H11" stroke="#AFB1B3" stroke-width="1.6"/></svg>
<div class="a" style="left:434px;top:584px;width:10px;height:1.5px;background:#5F6263"></div>
<svg style="left:433px;top:606px" width="12" height="7"><path d="M0 7H12L6 0z" fill="#5F6263"/></svg>
<svg style="left:433px;top:634px" width="12" height="7"><path d="M0 0H12L6 7z" fill="#5F6263"/></svg>
<svg style="left:433px;top:656px" width="12" height="12"><path d="M1 9V1H9" stroke="#5F6263" stroke-width="1.2" fill="none"/><rect x="3.5" y="3.5" width="8" height="8" fill="#5F6263"/><path d="M5 6H10M5 8.5H10" stroke="#3C3F41"/></svg>
<div class="a" style="left:428px;top:679px;width:22px;height:22px;background:#4D5254;border-radius:3px"></div>
<svg style="left:431px;top:685px" width="16" height="10" viewBox="0 0 16 10"><rect x="1" y="3" width="5.5" height="5.5" rx="2" stroke="#AFB1B3" stroke-width="1.5" fill="none"/><rect x="9.5" y="3" width="5.5" height="5.5" rx="2" stroke="#AFB1B3" stroke-width="1.5" fill="none"/><path d="M6.5 4.5H9.5M0.5 3.5L2 0.8M15.5 3.5L14 0.8" stroke="#AFB1B3" stroke-width="1.3"/></svg>
<!-- variables tree -->
<svg style="left:456px;top:551px" width="8" height="10"><path d="M0 0L8 5L0 10z" fill="#AFB1B3"/></svg>
<svg style="left:473px;top:550px" width="13" height="13"><circle cx="6.5" cy="6.5" r="6.5" fill="#C49A42"/><text x="6.5" y="10.5" font-family="Liberation Sans" font-size="10" fill="#2B2B2B" text-anchor="middle">p</text></svg>
<div class="t" style="left:491px;top:550px;font-size:13.5px"><span style="color:#F28C8C">req</span> = <span style="color:#8C8C8C">{RequestWrapper@1864}</span> "spark.Request@4271ca0a"</div>
<svg style="left:456px;top:570px" width="8" height="10"><path d="M0 0L8 5L0 10z" fill="#AFB1B3"/></svg>
<svg style="left:473px;top:569px" width="13" height="13"><circle cx="6.5" cy="6.5" r="6.5" fill="#C49A42"/><text x="6.5" y="10.5" font-family="Liberation Sans" font-size="10" fill="#2B2B2B" text-anchor="middle">p</text></svg>
<div class="t" style="left:491px;top:569px;font-size:13.5px"><span style="color:#F28C8C">res</span> = <span style="color:#8C8C8C">{ResponseWrapper@1865}</span> "spark.Response@78411463"</div>
<svg style="left:456px;top:589px" width="8" height="10"><path d="M0 0L8 5L0 10z" fill="#AFB1B3"/></svg>
<svg style="left:475px;top:589px" width="10" height="11"><rect y="0" width="10" height="2.6" fill="#C49A42"/><rect y="4.2" width="10" height="2.6" fill="#C49A42"/><rect y="8.4" width="10" height="2.6" fill="#C49A42"/></svg>
<div class="t" style="left:490px;top:588px;font-size:13.5px"><span style="color:#F28C8C">j</span> = <span style="color:#8C8C8C">{JSONObject@1873}</span> "{"Op2":3,"Op1":10,"IsAdd":true}"</div>
<svg style="left:474px;top:608px" width="12" height="11"><rect width="12" height="11" fill="#3D8EB9"/><text x="6" y="8.6" font-family="Liberation Sans" font-size="7.5" fill="#1E2D36" text-anchor="middle">01</text></svg>
<div class="t" style="left:491px;top:607px;font-size:13.5px"><span style="color:#F28C8C">op1</span> = 10</div>
<svg style="left:474px;top:627px" width="12" height="11"><rect width="12" height="11" fill="#3D8EB9"/><text x="6" y="8.6" font-family="Liberation Sans" font-size="7.5" fill="#1E2D36" text-anchor="middle">01</text></svg>
<div class="t" style="left:491px;top:626px;font-size:13.5px"><span style="color:#F28C8C">op2</span> = 3</div>
<svg style="left:474px;top:646px" width="12" height="11"><rect width="12" height="11" fill="#3D8EB9"/><text x="6" y="8.6" font-family="Liberation Sans" font-size="7.5" fill="#1E2D36" text-anchor="middle">01</text></svg>
<div class="t" style="left:491px;top:645px;font-size:13.5px"><span style="color:#F28C8C">isAdd</span> = true</div>
<!-- status bar content -->
<svg style="left:34px;top:759px" width="11" height="14" viewBox="0 0 11 14"><path d="M1 0V14M1 8H5" stroke="#AFB1B3" stroke-width="1.6"/><path d="M5 8L8 3.5" stroke="#AFB1B3" stroke-width="1.6"/><path d="M5.5 3H10.5V8z" fill="#AFB1B3"/></svg>
<div class="t" style="left:50px;top:759px;font-size:11.4px"><u>9</u>: Version Control</div>
<svg style="left:165px;top:760px" width="12" height="11"><rect width="12" height="11" fill="#AFB1B3"/><path d="M3 3L6 5.5L3 8" stroke="#3C3F41" stroke-width="1.4" fill="none"/></svg>
<div class="t" style="left:181px;top:759px;font-size:11.8px">Terminal</div>
<svg style="left:247px;top:760px" width="9" height="11"><path d="M0 0L9 5.5L0 11z" fill="#AFB1B3"/></svg>
<div class="t" style="left:263px;top:759px;font-size:11.3px"><u>4</u>: Run</div>
<svg style="left:315px;top:759px" width="14" height="14" viewBox="0 0 16 16"><g fill="#AFB1B3"><ellipse cx="6.3" cy="8.5" rx="5" ry="5.5"/><path d="M3 0.5L5 3M9.6 0.5L7.6 3" stroke="#AFB1B3" stroke-width="1.3"/></g><path d="M0 6.5h12.6M0 10h12.6M6.3 4v10" stroke="#2D2F30" stroke-width="1"/><circle cx="13.3" cy="13.6" r="2.2" fill="#00E600"/></svg>
<div class="t" style="left:331px;top:759px;font-size:11.7px;color:#D0D0D0"><u>5</u>: Debug</div>
<svg style="left:401px;top:760px" width="11" height="11"><path d="M0 1.5H2M4 1.5H11M0 5.5H2M4 5.5H11M0 9.5H2M4 9.5H11" stroke="#AFB1B3" stroke-width="1.5"/></svg>
<div class="t" style="left:417px;top:759px;font-size:11.2px"><u>6</u>: TODO</div>
<svg style="left:1298px;top:759px" width="13" height="13" viewBox="0 0 13 13"><path d="M1.5 12.2L2.2 9.4A5.6 5.6 0 1 1 4 11.3z" stroke="#AFB1B3" stroke-width="1.3" fill="none" stroke-linejoin="round"/></svg>
<div class="t" style="left:1315px;top:759px;font-size:11.2px">Event Log</div>

</body></html>
